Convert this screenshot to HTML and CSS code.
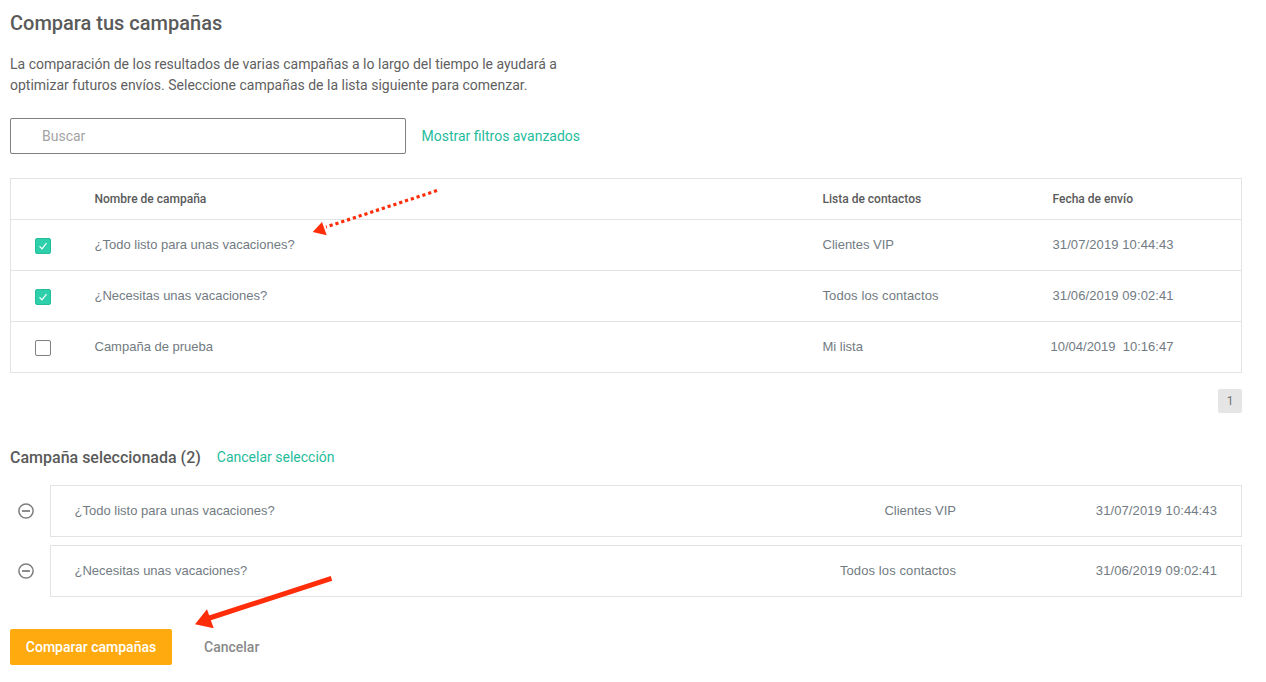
FILE: index.html
```html
<!DOCTYPE html>
<html lang="es">
  <head>
    <meta charset="UTF-8" />
    <title>Compara tus campañas</title>
    <link rel="stylesheet" href="styles.css">
  </head>
  <body>
    <div class="page">
      <h1 class="title">Compara tus campañas</h1>
      <p class="intro">La comparación de los resultados de varias campañas a lo largo del tiempo le ayudará a<br>optimizar futuros envíos. Seleccione campañas de la lista siguiente para comenzar.</p>

      <div class="search-row">
        <div class="search-box">Buscar</div>
        <a class="link">Mostrar filtros avanzados</a>
      </div>

      <div class="table">
        <div class="row head">
          <span></span>
          <span>Nombre de campaña</span>
          <span>Lista de contactos</span>
          <span>Fecha de envío</span>
        </div>
        <div class="row">
          <span class="check on"><svg width="10" height="10" viewBox="0 0 10 10"><path d="M1.5 5.4 4 7.8 8.5 2.2" fill="none" stroke="#fff" stroke-width="1.2"/></svg></span>
          <span>¿Todo listo para unas vacaciones?</span>
          <span>Clientes VIP</span>
          <span class="wide">31/07/2019 10:44:43</span>
        </div>
        <div class="row">
          <span class="check on"><svg width="10" height="10" viewBox="0 0 10 10"><path d="M1.5 5.4 4 7.8 8.5 2.2" fill="none" stroke="#fff" stroke-width="1.2"/></svg></span>
          <span>¿Necesitas unas vacaciones?</span>
          <span class="wide">Todos los contactos</span>
          <span class="wide">31/06/2019 09:02:41</span>
        </div>
        <div class="row">
          <span class="check"></span>
          <span>Campaña de prueba</span>
          <span>Mi lista</span>
          <span class="date-shift">10/04/2019&nbsp; 10:16:47</span>
        </div>
      </div>

      <div class="pager"><span class="page-num">1</span></div>

      <div class="selected-head">
        <h2 class="subtitle">Campaña seleccionada (2)</h2>
        <a class="link">Cancelar selección</a>
      </div>

      <div class="selected-row">
        <svg class="minus" width="16" height="16" viewBox="0 0 16 16"><circle cx="8" cy="8" r="7.1" fill="none" stroke="#7f7f7f" stroke-width="1.5"/><path d="M4 8h8" stroke="#7f7f7f" stroke-width="1.8"/></svg>
        <div class="selected-box">
          <span class="sel-name">¿Todo listo para unas vacaciones?</span>
          <span class="sel-list">Clientes VIP</span>
          <span class="sel-date wide">31/07/2019 10:44:43</span>
        </div>
      </div>
      <div class="selected-row">
        <svg class="minus" width="16" height="16" viewBox="0 0 16 16"><circle cx="8" cy="8" r="7.1" fill="none" stroke="#7f7f7f" stroke-width="1.5"/><path d="M4 8h8" stroke="#7f7f7f" stroke-width="1.8"/></svg>
        <div class="selected-box">
          <span class="sel-name">¿Necesitas unas vacaciones?</span>
          <span class="sel-list wide">Todos los contactos</span>
          <span class="sel-date wide">31/06/2019 09:02:41</span>
        </div>
      </div>

      <div class="actions">
        <button class="btn-primary">Comparar campañas</button>
        <button class="btn-cancel">Cancelar</button>
      </div>
    </div>

    <!-- red arrows drawn on top of the screenshot -->
    <svg class="arrows" width="1266" height="682" viewBox="0 0 1266 682">
      <path d="M437 190.6 326 227" fill="none" stroke="#ff2d0a" stroke-width="3.2" stroke-dasharray="3.2 2.9"/>
      <path d="M312.7 232 322 222 326.7 235.3Z" fill="#ff2d0a"/>
      <path d="M331.5 578.3 208 618.5" fill="none" stroke="#ff2d0a" stroke-width="5"/>
      <path d="M195 624.3 207 609.3 213.7 628.3Z" fill="#ff2d0a"/>
    </svg>
  </body>
</html>
```

FILE: styles.css
```css
* {
  box-sizing: border-box;
}
body {
  margin: 0;
  background: #fff;
  font-family: Roboto, "Liberation Sans", sans-serif;
  color: #555;
  overflow: hidden;
}
.page {
  width: 1242px;
  padding: 11px 0 0 10px;
}
.title {
  margin: 0;
  font-size: 20px;
  line-height: 24px;
  font-weight: 500;
  color: #5a5a5a;
}
.intro {
  margin: 19px 0 0;
  font-size: 14px;
  line-height: 21px;
  color: #5f5f5f;
}
.search-row {
  display: flex;
  align-items: center;
  gap: 15.5px;
  margin-top: 22px;
}
.search-box {
  width: 396px;
  height: 36px;
  padding-left: 31px;
  border: 1px solid #808080;
  border-radius: 2px;
  font-size: 14px;
  line-height: 34px;
  color: #a3a3a3;
}
.link {
  font-size: 14px;
  color: #1fbc9c;
}
.table {
  margin-top: 24px;
  border: 1px solid #e3e3e3;
}
.row {
  display: grid;
  grid-template-columns: 83.5px 728px 230px 1fr;
  align-items: center;
  height: 51px;
  padding-bottom: 1px;
  border-top: 1px solid #e3e3e3;
  font-family: "Liberation Sans", Arial, sans-serif;
  font-size: 13px;
  color: #727b82;
}
.row.head {
  height: 40px;
  padding-bottom: 0;
  border-top: 0;
  font-family: Roboto, sans-serif;
  font-size: 12px;
  font-weight: 500;
  color: #5a5a5a;
}
.wide {
  letter-spacing: 0.1px;
}
.check {
  display: flex;
  align-items: center;
  justify-content: center;
  width: 16px;
  height: 16px;
  margin: 3px 0 0 24px;
  border: 1px solid #808080;
  border-radius: 2px;
}
.check.on {
  background: #2dd0aa;
  border-color: #26bd9a;
}
.date-shift {
  margin-left: -2px;
}
.pager {
  display: flex;
  justify-content: flex-end;
  margin-top: 16px;
}
.page-num {
  width: 24px;
  height: 24px;
  border-radius: 2px;
  background: #e5e5e5;
  font-size: 12px;
  line-height: 24px;
  text-align: center;
  color: #707070;
}
.selected-head {
  display: flex;
  align-items: center;
  gap: 16px;
  margin-top: 34px;
  height: 20px;
}
.subtitle {
  margin: 0;
  font-size: 16px;
  font-weight: 500;
  color: #5a5a5a;
}
.selected-row {
  display: flex;
  align-items: center;
  margin-top: 8px;
}
.selected-head + .selected-row {
  margin-top: 18px;
}
.minus {
  margin: 0 16px 0 8px;
  flex: none;
}
.selected-box {
  display: flex;
  align-items: center;
  flex: 1;
  height: 52px;
  padding: 0 24px 1px 23.5px;
  border: 1px solid #e3e3e3;
  font-family: "Liberation Sans", Arial, sans-serif;
  font-size: 13px;
  color: #727b82;
}
.sel-name {
  flex: 1;
}
.sel-date {
  width: 261px;
  text-align: right;
}
.actions {
  display: flex;
  align-items: center;
  gap: 32px;
  margin-top: 32px;
}
.btn-primary {
  width: 162px;
  height: 36px;
  padding: 0;
  border: 0;
  border-radius: 2px;
  background: #ffab0f;
  font-family: Roboto, sans-serif;
  font-size: 14px;
  font-weight: 500;
  color: #fff;
}
.btn-cancel {
  padding: 0;
  border: 0;
  background: none;
  font-family: Roboto, sans-serif;
  font-size: 14px;
  font-weight: 500;
  color: #8a8a8a;
}
.arrows {
  position: absolute;
  left: 0;
  top: 0;
  pointer-events: none;
}
```
